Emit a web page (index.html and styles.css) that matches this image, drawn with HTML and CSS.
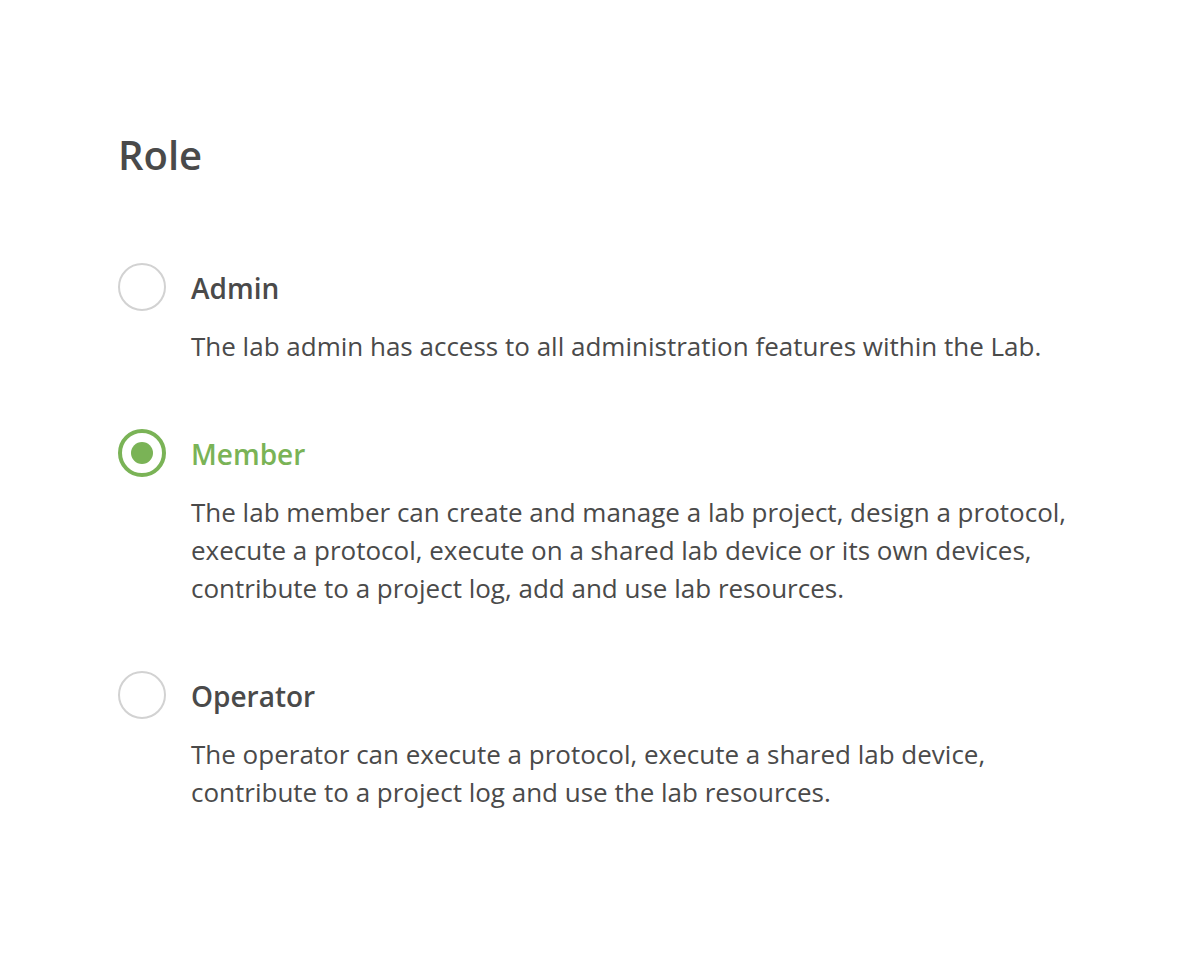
FILE: index.html
```html
<!DOCTYPE html>
<html lang="en">
<head>
  <meta charset="UTF-8">
  <title>Role</title>
  <link rel="stylesheet" href="styles.css">
</head>
<body>
  <div class="page">
    <h1 class="title">Role</h1>
    <div class="roles">
      <label class="role">
        <span class="radio"></span>
        <span class="role-text">
          <span class="role-name">Admin</span>
          <span class="role-desc">The lab admin has access to all administration features within the Lab.</span>
        </span>
      </label>

      <label class="role selected">
        <span class="radio"></span>
        <span class="role-text">
          <span class="role-name">Member</span>
          <span class="role-desc">The lab member can create and manage a lab project, design a protocol, execute a protocol, execute on a shared lab device or its own devices, contribute to a project log, add and use lab resources.</span>
        </span>
      </label>

      <label class="role">
        <span class="radio"></span>
        <span class="role-text">
          <span class="role-name">Operator</span>
          <span class="role-desc">The operator can execute a protocol, execute a shared lab device,<br>contribute to a project log and use the lab resources.</span>
        </span>
      </label>
    </div>
  </div>
</body>
</html>
```

FILE: styles.css
```css
* {
  margin: 0;
  padding: 0;
  box-sizing: border-box;
}

body {
  background: #fff;
  font-family: 'Open Sans', 'Noto Sans', sans-serif;
  color: #4a4a4a;
}

.page {
  padding: 131px 0 0 118px;
}

.title {
  font-size: 40px;
  line-height: 48px;
  font-weight: 600;
  color: #4a4a4a;
}

.roles {
  display: flex;
  flex-direction: column;
  gap: 65px;
  margin-top: 85px;
}

.role {
  display: flex;
  align-items: flex-start;
  gap: 25px;
  cursor: pointer;
}

.radio {
  flex: none;
  width: 48px;
  height: 48px;
  margin-top: -1px;
  border: 2px solid #d2d2d2;
  border-radius: 50%;
  display: flex;
  align-items: center;
  justify-content: center;
}

.role.selected .radio {
  border: 4px solid #7ab356;
}

.role.selected .radio::after {
  content: '';
  width: 22px;
  height: 22px;
  border-radius: 50%;
  background: #7ab356;
}

.role-text {
  display: flex;
  flex-direction: column;
  gap: 15px;
  width: 900px;
}

.role-name {
  font-size: 28px;
  line-height: 48px;
  font-weight: 600;
  color: #4a4a4a;
}

.role.selected .role-name {
  color: #7ab356;
}

.role-desc {
  font-size: 26px;
  line-height: 38px;
  color: #4a4a4a;
}
```
